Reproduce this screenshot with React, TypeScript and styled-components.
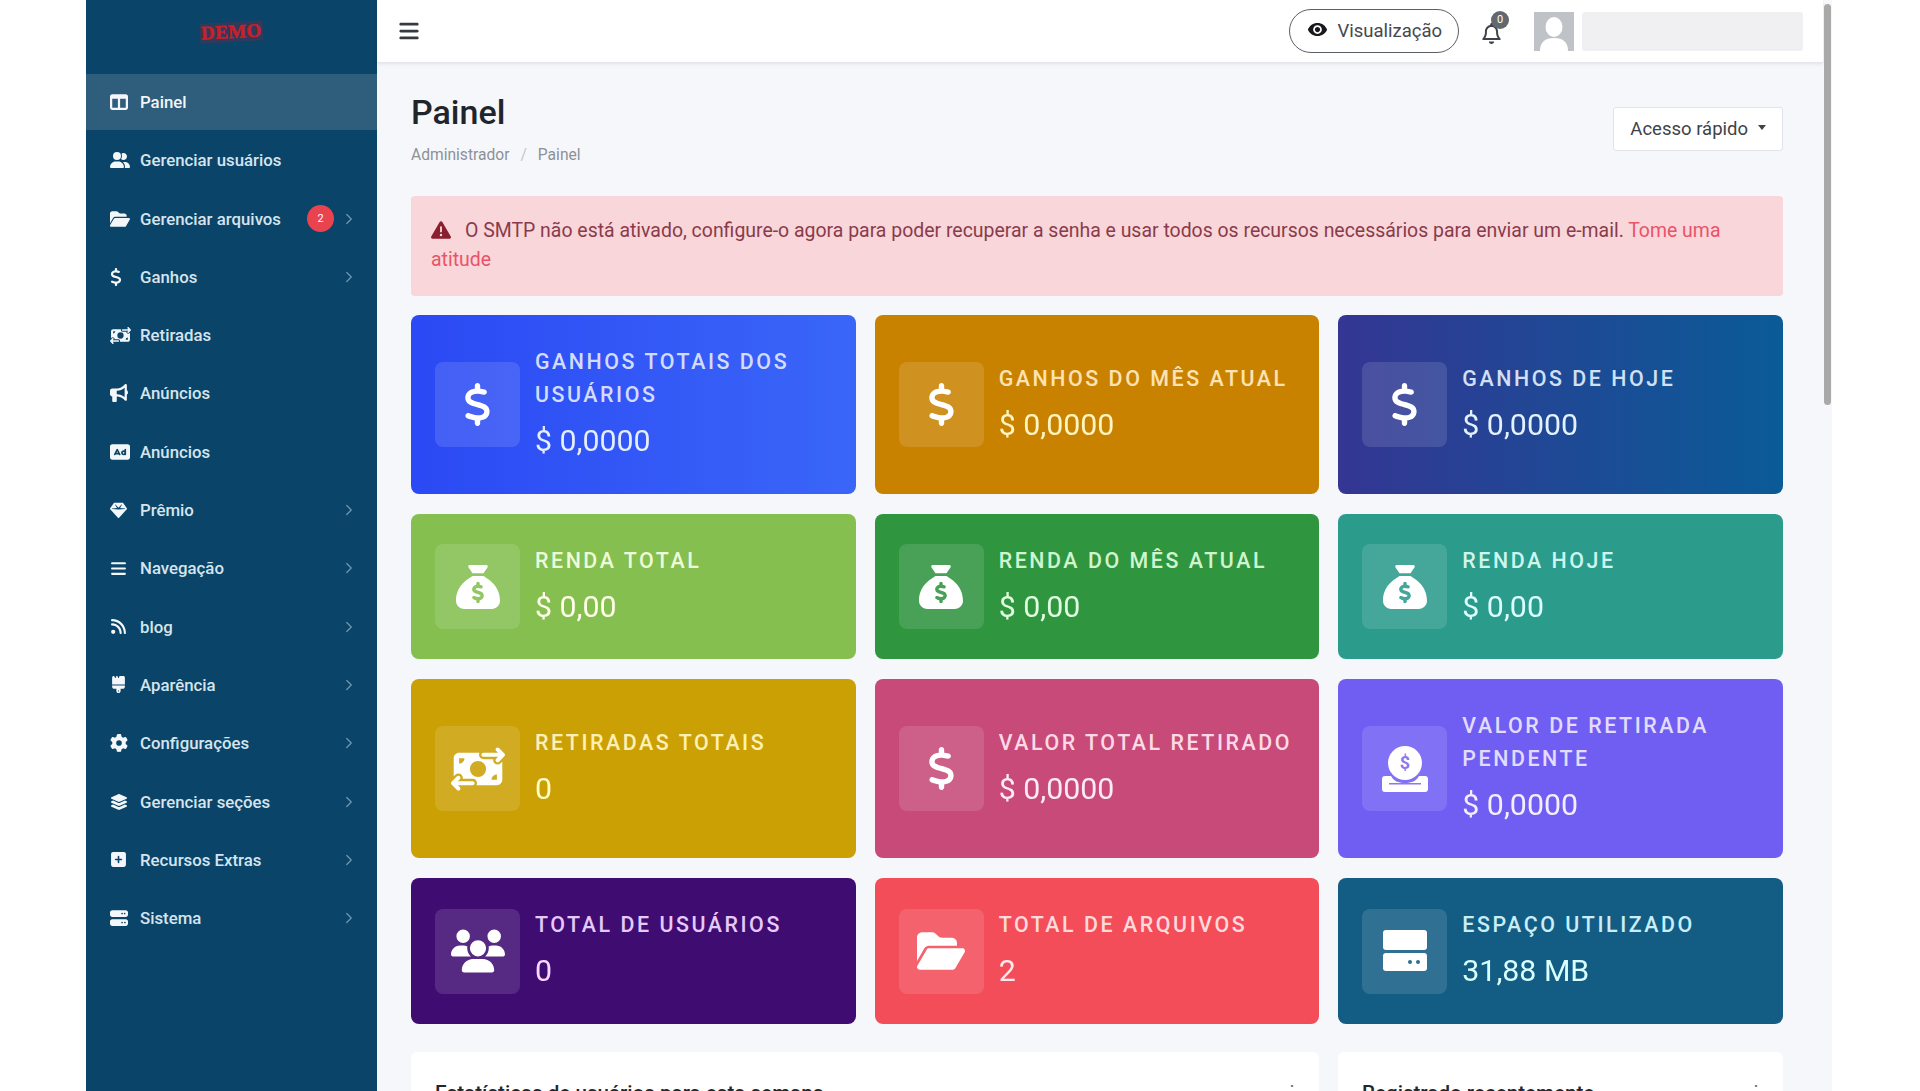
import styled, { createGlobalStyle } from "styled-components"
import { ReactNode } from "react"
import { ChevronRight } from "lucide-react"
import { MdRemoveRedEye } from "react-icons/md"
import {
    FaBars, FaBrush, FaBullhorn, FaDollarSign, FaFolderOpen, FaGear, FaGem, FaLayerGroup,
    FaMoneyBillTransfer, FaRectangleAd, FaRss, FaSackDollar, FaServer, FaSquarePlus,
    FaTableColumns, FaTriangleExclamation, FaUserGroup, FaUsers, FaRegBell,
} from "react-icons/fa6"

function CoinTray() {
    return (
        <svg width="46" height="46" viewBox="0 0 46 46">
            <circle cx="23" cy="17" r="17" fill="#fff" />
            <text x="23" y="23" textAnchor="middle" fontSize="18" fontWeight="700" fontFamily="Roboto, sans-serif" fill="#8a7af0">$</text>
            <path d="M3 30h6c3 5 7 7 14 7s11-2 14-7h6c2 0 3 1 3 3v10c0 2-1 3-3 3H3c-2 0-3-1-3-3V33c0-2 1-3 3-3z" fill="#fff" />
            <rect x="7" y="37" width="32" height="1.5" fill="#8a7af0" />
        </svg>
    )
}

function Storage() {
    return (
        <svg width="46" height="42" viewBox="0 0 46 42">
            <rect x="1" y="0" width="44" height="20" rx="3" fill="#fff" />
            <rect x="1" y="23" width="44" height="18" rx="3" fill="#fff" />
            <circle cx="28" cy="32" r="2" fill="#2f6f90" />
            <circle cx="36" cy="32" r="2" fill="#2f6f90" />
        </svg>
    )
}

type NavEntry = { icon: ReactNode; label: string; arrow?: boolean; badge?: number; active?: boolean }

const NarrowDollar = styled(FaDollarSign)`
    width: 12px;
`

const nav: NavEntry[] = [
    { icon: <FaTableColumns size={18} />, label: "Painel", active: true },
    { icon: <FaUserGroup size={20} />, label: "Gerenciar usuários" },
    { icon: <FaFolderOpen size={20} />, label: "Gerenciar arquivos", arrow: true, badge: 2 },
    { icon: <NarrowDollar size={18} />, label: "Ganhos", arrow: true },
    { icon: <FaMoneyBillTransfer size={21} />, label: "Retiradas" },
    { icon: <FaBullhorn size={18} />, label: "Anúncios" },
    { icon: <FaRectangleAd size={20} />, label: "Anúncios" },
    { icon: <FaGem size={17} />, label: "Prêmio", arrow: true },
    { icon: <FaBars size={17} />, label: "Navegação", arrow: true },
    { icon: <FaRss size={17} />, label: "blog", arrow: true },
    { icon: <FaBrush size={17} />, label: "Aparência", arrow: true },
    { icon: <FaGear size={18} />, label: "Configurações", arrow: true },
    { icon: <FaLayerGroup size={18} />, label: "Gerenciar seções", arrow: true },
    { icon: <FaSquarePlus size={17} />, label: "Recursos Extras", arrow: true },
    { icon: <FaServer size={18} />, label: "Sistema", arrow: true },
]

const dollar = <FaDollarSign size={43} />
const sack = <FaSackDollar size={44} />

type Stat = { icon: ReactNode; label: string; value: string; bg: string; tint: string }

const stats: Stat[] = [
    { icon: dollar, label: "Ganhos totais dos usuários", value: "$ 0,0000", bg: "linear-gradient(90deg, #2b49f4, #3a66f8)", tint: "#d3dcff" },
    { icon: dollar, label: "Ganhos do mês atual", value: "$ 0,0000", bg: "#c98200", tint: "#fde3b4" },
    { icon: dollar, label: "Ganhos de hoje", value: "$ 0,0000", bg: "linear-gradient(90deg, #343693, #0a5b97)", tint: "#d2e0f5" },
    { icon: sack, label: "Renda total", value: "$ 0,00", bg: "#84bf4f", tint: "#eefbd9" },
    { icon: sack, label: "Renda do mês atual", value: "$ 0,00", bg: "#2f953f", tint: "#cff5d0" },
    { icon: sack, label: "Renda hoje", value: "$ 0,00", bg: "#2b9b8b", tint: "#cdf6ee" },
    { icon: <FaMoneyBillTransfer size={54} />, label: "Retiradas totais", value: "0", bg: "#cba004", tint: "#fdf0b6" },
    { icon: dollar, label: "Valor total retirado", value: "$ 0,0000", bg: "#c74a78", tint: "#fdd9e6" },
    { icon: <CoinTray />, label: "Valor de retirada pendente", value: "$ 0,0000", bg: "#705ef3", tint: "#e2dcff" },
    { icon: <FaUsers size={54} />, label: "Total de usuários", value: "0", bg: "#3f0c72", tint: "#e6c9fb" },
    { icon: <FaFolderOpen size={48} />, label: "Total de arquivos", value: "2", bg: "#f34d5a", tint: "#ffd9dc" },
    { icon: <Storage />, label: "Espaço utilizado", value: "31,88 MB", bg: "#135d84", tint: "#c9eef8" },
]

function App() {
    return (
        <>
            <GlobalStyle />
            <Screen>
                <Sidebar>
                    <LogoBar><Stamp>DEMO</Stamp></LogoBar>
                    <NavList>
                        {nav.map((item, i) => (
                            <NavItem key={i} $active={item.active}>
                                <NavIcon>{item.icon}</NavIcon>
                                <NavLabel>{item.label}</NavLabel>
                                {item.badge && <Badge>{item.badge}</Badge>}
                                {item.arrow && <Arrow><ChevronRight size={18} strokeWidth={1.6} /></Arrow>}
                            </NavItem>
                        ))}
                    </NavList>
                </Sidebar>
                <Main>
                    <Column>
                        <Topbar>
                            <Burger><FaBars size={22} /></Burger>
                            <PreviewButton><MdRemoveRedEye size={21} />Visualização</PreviewButton>
                            <Bell>
                                <FaRegBell size={21} />
                                <BellCount>0</BellCount>
                            </Bell>
                            <Avatar>
                                <svg width="40" height="39" viewBox="0 0 40 39">
                                    <rect width="40" height="39" fill="#bfc3c7" />
                                    <ellipse cx="20" cy="15" rx="8.5" ry="10" fill="#fff" />
                                    <path d="M6 39c0-9 5-13 14-13s14 4 14 13z" fill="#fff" />
                                </svg>
                            </Avatar>
                            <HiddenName />
                        </Topbar>
                        <Content>
                            <PageHead>
                                <div>
                                    <Title>Painel</Title>
                                    <Crumbs>Administrador<CrumbSlash>/</CrumbSlash>Painel</Crumbs>
                                </div>
                                <QuickButton>Acesso rápido<Caret /></QuickButton>
                            </PageHead>
                            <Alert>
                                <AlertIcon><FaTriangleExclamation size={20} /></AlertIcon>
                                O SMTP não está ativado, configure-o agora para poder recuperar a senha e usar todos os recursos necessários para enviar um e-mail. <AlertLink>Tome uma atitude</AlertLink>
                            </Alert>
                            <StatGrid>
                                {stats.map((s, i) => (
                                    <StatCard key={i} $bg={s.bg}>
                                        <StatIcon>{s.icon}</StatIcon>
                                        <StatText>
                                            <StatLabel $tint={s.tint}>{s.label}</StatLabel>
                                            <StatValue $tint={s.tint}>{s.value}</StatValue>
                                        </StatText>
                                    </StatCard>
                                ))}
                            </StatGrid>
                            <Panels>
                                <Panel>
                                    <PanelTitle>Estatísticas de usuários para esta semana</PanelTitle>
                                    <PanelDots>⋮</PanelDots>
                                </Panel>
                                <Panel>
                                    <PanelTitle>Registrado recentemente</PanelTitle>
                                    <PanelDots>⋮</PanelDots>
                                </Panel>
                            </Panels>
                        </Content>
                    </Column>
                    <ScrollTrack><ScrollThumb /></ScrollTrack>
                </Main>
            </Screen>
        </>
    )
}

const GlobalStyle = createGlobalStyle`
    html, body {
        margin: 0;
        height: 1091px;
        overflow: hidden;
        background: #fff;
        font-family: Roboto, "Liberation Sans", sans-serif;
    }
`

const Screen = styled.div`
    display: flex;
    height: 1091px;
    padding: 0 88px 0 86px;
    overflow: hidden;
`

const Sidebar = styled.aside`
    flex: 0 0 291px;
    background: #0a4468;
`

const LogoBar = styled.div`
    display: flex;
    justify-content: center;
    padding-top: 22px;
    height: 52px;
`

const Stamp = styled.span`
    align-self: flex-start;
    padding: 0 1px;
    height: 20px;
    line-height: 20px;
    font-family: "Liberation Serif", serif;
    font-weight: 700;
    font-size: 19px;
    letter-spacing: 0.4px;
    color: #c81f2b;
    -webkit-text-stroke: 0.6px #c81f2b;
    background: rgba(120, 40, 70, 0.35);
    transform: rotate(-3deg);
`

const NavList = styled.nav`
    display: flex;
    flex-direction: column;
    gap: 2.3px;
`

const NavItem = styled.div<{ $active?: boolean }>`
    display: flex;
    align-items: center;
    height: 56px;
    padding: 0 19px 0 24px;
    background: ${p => p.$active ? "#2f5d7c" : "transparent"};
    color: ${p => p.$active ? "#f2f6f9" : "#d6e4ee"};
`

const NavIcon = styled.span`
    display: flex;
    flex: 0 0 30px;
    color: #f4f7fa;
`

const NavLabel = styled.span`
    flex: 1;
    font-size: 16.8px;
    font-weight: 500;
`

const Badge = styled.span`
    width: 27px;
    height: 27px;
    margin-right: 6px;
    border-radius: 50%;
    background: #ea4350;
    color: #fff;
    font-size: 11px;
    line-height: 27px;
    text-align: center;
`

const Arrow = styled.span`
    display: flex;
    color: #6f9ab5;
`

const Main = styled.main`
    flex: 1;
    display: flex;
    min-width: 0;
    background: #f6f7fb;
`

const Column = styled.div`
    flex: 1;
    min-width: 0;
`

const ScrollTrack = styled.div`
    flex: 0 0 9px;
    padding: 4px 1px 0 1px;
    box-sizing: border-box;
`

const ScrollThumb = styled.div`
    height: 401px;
    border-radius: 4px;
    background: #a9a9a9;
`

const Topbar = styled.header`
    display: flex;
    align-items: center;
    height: 62px;
    padding: 0 20px 0 21px;
    background: #fff;
    box-shadow: 0 2px 3px rgba(40, 50, 70, 0.1);
`

const Burger = styled.span`
    display: flex;
    margin-right: auto;
    color: #343a40;
`

const PreviewButton = styled.div`
    display: flex;
    align-items: center;
    gap: 9px;
    height: 44px;
    box-sizing: border-box;
    padding: 0 16px 0 17px;
    border: 1.5px solid #5c5f63;
    border-radius: 22px;
    font-size: 18.5px;
    color: #45494e;

    svg {
        color: #17191c;
        margin-top: -3px;
    }
`

const Bell = styled.div`
    position: relative;
    display: flex;
    margin: 4px 32px 0 22px;
    color: #3d4349;
`

const BellCount = styled.span`
    position: absolute;
    top: -12px;
    right: -7px;
    width: 18px;
    height: 18px;
    border-radius: 50%;
    background: #63686e;
    color: #fff;
    font-size: 11px;
    line-height: 18px;
    text-align: center;
`

const Avatar = styled.div`
    display: flex;
    margin-right: 8px;
`

const HiddenName = styled.div`
    width: 221px;
    height: 39px;
    background: #f0f0f3;
    border-radius: 3px;
`

const Content = styled.div`
    padding: 0 40px 0 34px;
`

const PageHead = styled.div`
    display: flex;
    align-items: flex-start;
    justify-content: space-between;
    height: 134px;
    padding-top: 30px;
    box-sizing: border-box;
`

const Title = styled.h1`
    margin: 0;
    font-size: 34px;
    line-height: 40px;
    font-weight: 500;
    color: #20252b;
`

const Crumbs = styled.div`
    margin-top: 14px;
    font-size: 15.6px;
    color: #8c9198;
`

const CrumbSlash = styled.span`
    margin: 0 11px;
    color: #c2c5ca;
`

const QuickButton = styled.div`
    display: flex;
    align-items: center;
    gap: 10px;
    margin-top: 15px;
    height: 44px;
    box-sizing: border-box;
    padding: 0 16px;
    background: #fff;
    border: 1px solid #e2e3e8;
    border-radius: 3px;
    font-size: 18.5px;
    color: #3e4349;
`

const Caret = styled.span`
    border-top: 5px solid #3e4349;
    border-left: 4.5px solid transparent;
    border-right: 4.5px solid transparent;
    margin-bottom: 4px;
`

const Alert = styled.div`
    height: 100px;
    box-sizing: border-box;
    padding: 20px 20px;
    border-radius: 4px;
    background: #f8d6da;
    color: #8a3b4b;
    font-size: 19.45px;
    line-height: 29px;
`

const AlertIcon = styled.span`
    color: #8a1f30;
    margin-right: 14px;
    line-height: 0;

    svg {
        vertical-align: -3px;
    }
`

const AlertLink = styled.span`
    color: #ea5368;
`

const StatGrid = styled.section`
    display: grid;
    grid-template-columns: repeat(3, 1fr);
    grid-template-rows: 179px 145px 179px 146px;
    gap: 20px 19px;
    margin-top: 19px;
`

const StatCard = styled.article<{ $bg: string }>`
    display: flex;
    align-items: center;
    gap: 15px;
    padding: 0 24px;
    border-radius: 8px;
    background: ${p => p.$bg};
`

const StatIcon = styled.div`
    flex: 0 0 85px;
    height: 85px;
    display: flex;
    align-items: center;
    justify-content: center;
    border-radius: 8px;
    background: rgba(255, 255, 255, 0.12);
    color: #fff;
`

const StatText = styled.div`
    margin-top: -5px;
`

const StatLabel = styled.div<{ $tint: string }>`
    font-size: 21.4px;
    line-height: 33px;
    font-weight: 500;
    letter-spacing: 2.55px;
    text-transform: uppercase;
    color: ${p => p.$tint};
`

const StatValue = styled.div<{ $tint: string }>`
    margin-top: 12px;
    font-size: 30.3px;
    line-height: 36px;
    color: ${p => p.$tint};
    filter: brightness(1.08);
`

const Panels = styled.section`
    display: grid;
    grid-template-columns: 1fr 445px;
    gap: 19px;
    margin-top: 28px;
`

const Panel = styled.div`
    display: flex;
    justify-content: space-between;
    height: 200px;
    padding: 29px 18px 29px 24px;
    box-sizing: border-box;
    background: #fff;
    border-radius: 6px;
`

const PanelTitle = styled.h2`
    margin: 0;
    font-size: 20.6px;
    line-height: 24px;
    font-weight: 500;
    color: #23272c;
`

const PanelDots = styled.span`
    color: #6b7076;
    font-size: 18px;
    line-height: 22px;
`

export default App
